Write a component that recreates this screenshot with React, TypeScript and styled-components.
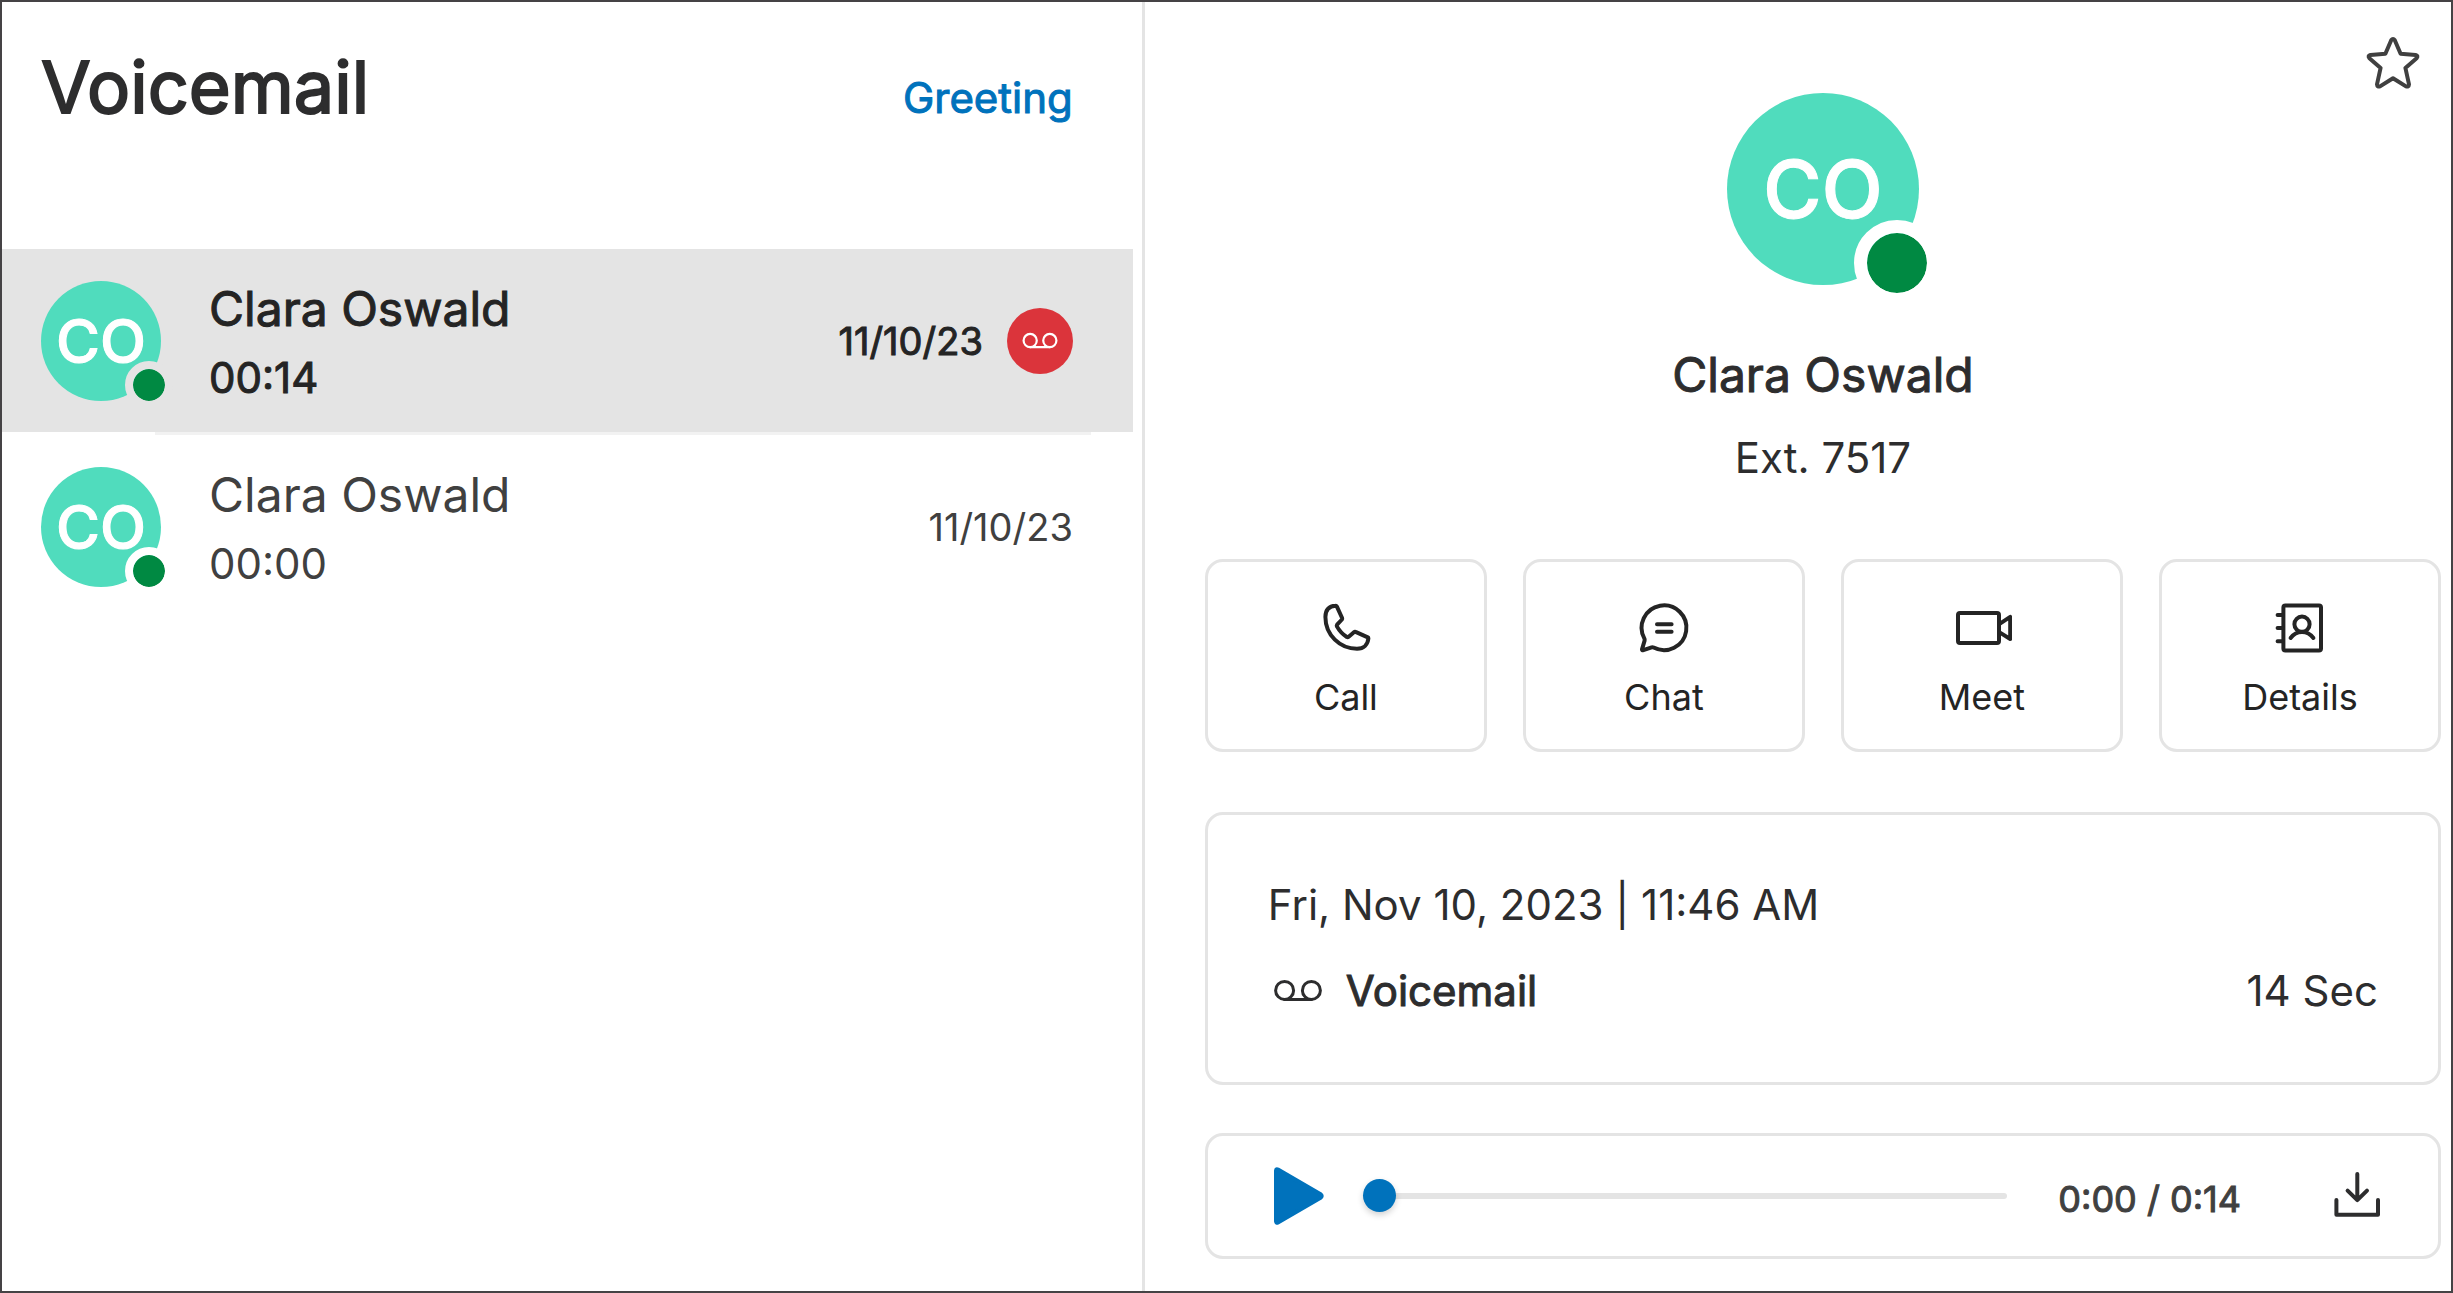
import React, { useState } from "react";
import styled, { createGlobalStyle, css } from "styled-components";

const color = {
  frame: "#454345",
  line: "#e4e4e4",
  faint: "#f2f2f2",
  ink: "#2d2d2e",
  strong: "#242424",
  muted: "#404040",
  blue: "#0072bc",
  teal: "#50dcbd",
  green: "#008942",
  red: "#db343b",
};

const GlobalStyle = createGlobalStyle`
  *, *::before, *::after { box-sizing: border-box; }
  body {
    margin: 0;
    background: #fff;
    color: ${color.ink};
    font-family: Inter, "Liberation Sans", sans-serif;
    font-weight: 380;
    -webkit-font-smoothing: antialiased;
  }
  h1, h2, p, ul { margin: 0; padding: 0; }
  button { font: inherit; color: inherit; background: none; border: 0; padding: 0; cursor: pointer; }
`;

/* Emphasis that keeps the advance widths of the regular face. */
const emphasis = css`
  font-weight: 400;
  -webkit-text-stroke: 1px currentColor;
`;

const Frame = styled.div`
  display: grid;
  grid-template-columns: minmax(0, 7fr) minmax(0, 8fr);
  min-height: 100vh;
  border: 2px solid ${color.frame};
`;

const ListPane = styled.section`
  border-right: 3px solid ${color.line};
  padding-right: 9px;
`;

const ListHeader = styled.header`
  display: flex;
  align-items: baseline;
  justify-content: space-between;
  padding: 40px 60px 117px 39px;
`;

const Title = styled.h1`
  ${emphasis}
  font-size: 72px;
  line-height: 90px;
  -webkit-text-stroke-width: 2px;
`;

const GreetingLink = styled.a`
  ${emphasis}
  color: ${color.blue};
  font-size: 42px;
  line-height: 54px;
  text-decoration: none;
`;

const Rows = styled.ul`
  list-style: none;
`;

const Row = styled.li<{ $selected: boolean }>`
  display: flex;
  align-items: center;
  gap: 48px;
  min-height: 183px;
  padding: 0 60px 0 39px;
  color: ${(p) => (p.$selected ? color.strong : color.muted)};
  background: ${(p) => (p.$selected ? color.line : "#fff")};
  ${(p) => p.$selected && emphasis}
`;

const Divider = styled.li`
  height: 3px;
  margin: 0 42px 0 153px;
  background: ${color.faint};
`;

const RowText = styled.div`
  display: grid;
  gap: 12px;
  flex: 1;
  padding-top: 2px;
`;

const RowName = styled.span`
  font-size: 48px;
  line-height: 60px;
`;

const Body = styled.span`
  font-size: 42px;
  line-height: 54px;
`;

const RowMeta = styled.div`
  display: flex;
  align-items: center;
  gap: 24px;
  font-size: 38px;
  line-height: 48px;
`;

const UnreadBadge = styled.span`
  display: grid;
  place-items: center;
  width: 66px;
  height: 66px;
  border-radius: 50%;
  color: #fff;
  background: ${color.red};
`;

const AvatarCircle = styled.div<{ $large?: boolean }>`
  position: relative;
  display: grid;
  place-items: center;
  flex: none;
  width: ${(p) => (p.$large ? 192 : 120)}px;
  height: ${(p) => (p.$large ? 192 : 120)}px;
  border-radius: 50%;
  color: #fff;
  background: ${color.teal};
  font-size: ${(p) => (p.$large ? 80 : 60)}px;
  line-height: 1;
  font-weight: 500;
  -webkit-text-stroke: 1px currentColor;
`;

const Presence = styled.span<{ $large?: boolean; $ring: string }>`
  position: absolute;
  right: ${(p) => (p.$large ? -21 : -12)}px;
  bottom: ${(p) => (p.$large ? -21 : -8)}px;
  width: ${(p) => (p.$large ? 86 : 48)}px;
  height: ${(p) => (p.$large ? 86 : 48)}px;
  border: ${(p) => (p.$large ? 13 : 8)}px solid ${(p) => p.$ring};
  border-radius: 50%;
  background: ${color.green};
  background-clip: padding-box;
`;

const DetailPane = styled.main`
  display: flex;
  flex-direction: column;
  padding: 31px 10px 32px 60px;
`;

const Toolbar = styled.div`
  display: flex;
  justify-content: flex-end;
  padding-right: 18px;
`;

const IconButton = styled.button`
  display: grid;
  place-items: center;
  flex: none;
`;

const Profile = styled.div`
  display: flex;
  flex-direction: column;
  align-items: center;
`;

const ContactName = styled.h2`
  ${emphasis}
  margin-top: 60px;
  font-size: 48px;
  line-height: 60px;
`;

const Extension = styled.p`
  margin-top: 26px;
  font-size: 42px;
  line-height: 54px;
`;

const Actions = styled.div`
  display: grid;
  grid-template-columns: repeat(4, minmax(0, 1fr));
  gap: 36px;
  margin-top: 74px;
`;

const ActionButton = styled.button`
  && {
    display: flex;
    flex-direction: column;
    align-items: center;
    gap: 15px;
    padding: 36px 0 28px;
    border: 3px solid ${color.line};
    border-radius: 18px;
    color: ${color.strong};
    font-size: 36px;
    line-height: 48px;
  }
`;

const Card = styled.section`
  border: 3px solid ${color.line};
  border-radius: 18px;
`;

const MessageCard = styled(Card)`
  display: grid;
  gap: 29px;
  margin-top: 60px;
  padding: 63px 60px 61px;
`;

const MessageRow = styled.div`
  display: flex;
  align-items: center;
  gap: 18px;
`;

const MessageKind = styled(Body)`
  ${emphasis}
  flex: 1;
`;

const Player = styled(Card)`
  display: flex;
  align-items: center;
  margin-top: 48px;
  padding: 30px 51px 30px 60px;
`;

const Seek = styled.input`
  appearance: none;
  flex: 1;
  min-width: 0;
  height: 33px;
  margin: 0 51px 0 35px;
  background: transparent;
  &::-webkit-slider-runnable-track {
    height: 6px;
    border-radius: 3px;
    background: ${color.line};
  }
  &::-webkit-slider-thumb {
    appearance: none;
    width: 33px;
    height: 33px;
    margin-top: -14px;
    border-radius: 50%;
    background: ${color.blue};
    box-shadow: 0 3px 6px rgba(0, 0, 0, 0.18);
  }
`;

const Time = styled.span`
  ${emphasis}
  margin-right: 86px;
  padding-top: 6px;
  color: ${color.muted};
  font-size: 36px;
  line-height: 48px;
  white-space: nowrap;
`;

type IconProps = { size?: number; stroke?: number; children: React.ReactNode };

function Icon({ size = 60, stroke = 4, children }: IconProps) {
  return (
    <svg
      width={size}
      height={size}
      viewBox="0 0 60 60"
      fill="none"
      stroke="currentColor"
      strokeWidth={stroke}
      strokeLinecap="round"
      strokeLinejoin="round"
      aria-hidden="true"
      display="block"
    >
      {children}
    </svg>
  );
}

const StarIcon = () => (
  <Icon>
    <path
      stroke={color.muted}
      d="M28.2 7.2Q30 4.6 31.8 7.2L37.6 20.7L52.6 22Q55.6 22.8 53.6 25.2L42.4 34.9L46 51.4Q45.8 54.2 43 53.4L30 45.2L17 53.4Q14.2 54.2 14 51.4L17.6 34.9L6.4 25.2Q4.4 22.8 7.4 22L22.4 20.7Z"
    />
  </Icon>
);

const PhoneIcon = () => (
  <Icon>
    <path d="M19.6 7.8C13 8.2 9.4 12 9.4 19C9.4 37 24 50.8 41 50.8C48 50.8 51.8 46.4 52.4 40.4Q52.4 39.7 51.8 39.4L39.6 33.9Q38.8 33.5 38.2 34L32.4 39Q31.6 39.6 30.8 39C27 36.6 23 32.2 20.9 28.4Q20.5 27.4 21.1 26.6L25.9 21.5Q26.4 20.8 26.1 20L20.8 8.4Q20.4 7.7 19.6 7.8Z" />
  </Icon>
);

const ChatIcon = () => (
  <Icon>
    <path d="M19.6 49.6A22.4 22.4 0 1 0 10.4 40.6Q10.8 41.6 10.6 42.6L8 51.4Q8 52.6 9.4 52.2L17.6 49.4Q18.6 49.1 19.6 49.6Z" />
    <path d="M23 26.2h14.6M23 33.7h14.6" />
  </Icon>
);

const VideoIcon = () => (
  <Icon>
    <rect x="6" y="15" width="41" height="30" rx="2" />
    <path d="M47.6 25.8L58.2 18.8V41L47.6 34.4" />
  </Icon>
);

const ContactIcon = () => (
  <Icon>
    <rect x="13.4" y="7.4" width="37.6" height="45.2" rx="2" />
    <path d="M7.6 17h5M7.6 30.1h5M7.6 43.2h5" />
    <circle cx="32" cy="26.2" r="7.6" />
    <path d="M20.6 40Q25 34 32 34T43.4 40" />
  </Icon>
);

const TapeIcon = ({ size = 60, stroke = 3 }: { size?: number; stroke?: number }) => (
  <Icon size={size} stroke={stroke}>
    <circle cx="16.6" cy="29.4" r="9" />
    <circle cx="43.4" cy="29.4" r="9" />
    <path d="M16.6 38.4H43.4" />
  </Icon>
);

const PlayIcon = () => (
  <Icon>
    <path fill="currentColor" d="M8 4.6V55.4Q8.2 57.4 10 56.4L53 31.4Q54.4 30 53 28.6L10 3.6Q8.2 2.6 8 4.6Z" />
  </Icon>
);

const DownloadIcon = () => (
  <Icon>
    <path d="M9.4 34V48.7H51V34" />
    <path d="M30.3 8V34M20.6 24.6L30.3 34.2L40 24.6" />
  </Icon>
);

function Avatar({ large, ring }: { large?: boolean; ring: string }) {
  return (
    <AvatarCircle $large={large}>
      CO
      <Presence $large={large} $ring={ring} />
    </AvatarCircle>
  );
}

const messages = [
  { id: 1, name: "Clara Oswald", length: "00:14", date: "11/10/23", unread: true },
  { id: 2, name: "Clara Oswald", length: "00:00", date: "11/10/23", unread: false },
];

const actions = [
  { label: "Call", icon: <PhoneIcon /> },
  { label: "Chat", icon: <ChatIcon /> },
  { label: "Meet", icon: <VideoIcon /> },
  { label: "Details", icon: <ContactIcon /> },
];

const PlayButton = styled(IconButton)`
  && {
    color: ${color.blue};
  }
`;

export default function App() {
  const [position, setPosition] = useState(0);

  return (
    <>
      <GlobalStyle />
      <Frame>
        <ListPane>
          <ListHeader>
            <Title>Voicemail</Title>
            <GreetingLink href="#greeting">Greeting</GreetingLink>
          </ListHeader>
          <Rows>
            {messages.map((m, i) => (
              <React.Fragment key={m.id}>
                {i > 0 && <Divider role="separator" />}
                <Row $selected={m.unread}>
                  <Avatar ring={m.unread ? color.line : "#fff"} />
                  <RowText>
                    <RowName>{m.name}</RowName>
                    <Body>{m.length}</Body>
                  </RowText>
                  <RowMeta>
                    {m.date}
                    {m.unread && (
                      <UnreadBadge>
                        <TapeIcon size={44} />
                      </UnreadBadge>
                    )}
                  </RowMeta>
                </Row>
              </React.Fragment>
            ))}
          </Rows>
        </ListPane>

        <DetailPane>
          <Toolbar>
            <IconButton type="button" aria-label="Add to favorites">
              <StarIcon />
            </IconButton>
          </Toolbar>
          <Profile>
            <Avatar large ring="#fff" />
            <ContactName>Clara Oswald</ContactName>
            <Extension>Ext. 7517</Extension>
          </Profile>
          <Actions>
            {actions.map((a) => (
              <ActionButton key={a.label} type="button">
                {a.icon}
                {a.label}
              </ActionButton>
            ))}
          </Actions>
          <MessageCard>
            <Body>Fri, Nov 10, 2023 | 11:46 AM</Body>
            <MessageRow>
              <TapeIcon />
              <MessageKind>Voicemail</MessageKind>
              <Body>14 Sec</Body>
            </MessageRow>
          </MessageCard>
          <Player aria-label="Voicemail player">
            <PlayButton type="button" aria-label="Play">
              <PlayIcon />
            </PlayButton>
            <Seek
              type="range"
              min={0}
              max={14}
              value={position}
              aria-label="Playback position"
              onChange={(e) => setPosition(Number(e.target.value))}
            />
            <Time>0:{String(position).padStart(2, "0")} / 0:14</Time>
            <IconButton type="button" aria-label="Download">
              <DownloadIcon />
            </IconButton>
          </Player>
        </DetailPane>
      </Frame>
    </>
  );
}
